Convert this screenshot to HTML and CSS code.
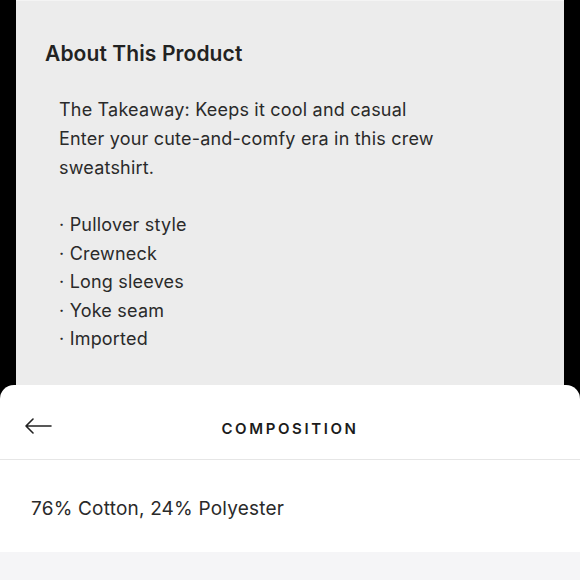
FILE: index.html
```html
<!DOCTYPE html>
<html>
<head>
<meta charset="utf-8">
<link rel="stylesheet" href="styles.css">
</head>
<body>
<div class="screen">
  <div class="panel">
    <h2 class="title">About This Product</h2>
    <div class="desc">
      <p class="para">The Takeaway: Keeps it cool and casual<br>Enter your cute-and-comfy era in this crew sweatshirt.</p>
      <ul class="bullets">
        <li>· Pullover style</li>
        <li>· Crewneck</li>
        <li>· Long sleeves</li>
        <li>· Yoke seam</li>
        <li>· Imported</li>
      </ul>
    </div>
  </div>
  <div class="sheet">
    <div class="sheet-head">
      <svg class="back" width="28" height="16" viewBox="0 0 28 16"><path d="M27 8H2M9 1L2 8l7 7" fill="none" stroke="#222" stroke-width="1.6" stroke-linecap="round" stroke-linejoin="round"/></svg>
      <div class="sheet-title">COMPOSITION</div>
    </div>
    <div class="sheet-body">76% Cotton, 24% Polyester</div>
    <div class="sheet-foot"></div>
  </div>
</div>
</body>
</html>
```
FILE: styles.css
```css
* { box-sizing: border-box; }
html, body { margin: 0; padding: 0; }
body { width: 580px; height: 580px; overflow: hidden; background: #000; font-family: Inter, "Noto Sans", sans-serif; color: #222; }
.screen { position: relative; width: 580px; height: 580px; }
.panel { margin: 0 16px; height: 400px; background: #ececec; border-top: 1px solid #f4f4f4; padding-top: 40px; padding-left: 29px; }
.title { margin: 0; font-size: 21px; font-weight: 600; line-height: 26px; color: #222; letter-spacing: 0.1px; }
.desc { padding-left: 14px; margin-top: 28px; width: 440px; font-size: 18px; color: #2a2a2a; letter-spacing: 0.2px; }
.para { margin: 0; line-height: 29px; }
.bullets { list-style: none; margin: 29px 0 0; padding: 0; line-height: 28.5px; }
.sheet { position: absolute; left: 0; top: 385px; width: 580px; height: 195px; background: #fff; border-radius: 14px 14px 0 0; display: flex; flex-direction: column; }
.sheet-head { position: relative; height: 75px; border-bottom: 1.5px solid #e6e6e6; display: flex; align-items: center; justify-content: center; }
.back { position: absolute; left: 24px; top: 33px; }
.sheet-title { font-size: 15px; font-weight: 600; letter-spacing: 2.6px; color: #1c1c1c; padding-top: 13px; }
.sheet-body { height: 92px; padding-left: 31px; padding-top: 5px; display: flex; align-items: center; font-size: 19px; color: #2a2a2a; letter-spacing: 0.2px; }
.sheet-foot { flex: 1; background: #f5f5f7; }
```
